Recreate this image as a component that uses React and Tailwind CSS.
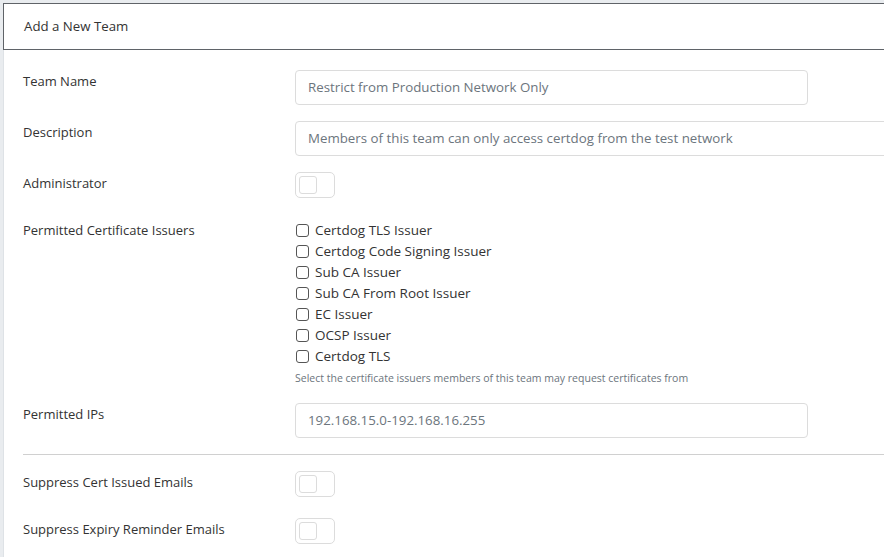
const issuers = [
  'Certdog TLS Issuer',
  'Certdog Code Signing Issuer',
  'Sub CA Issuer',
  'Sub CA From Root Issuer',
  'EC Issuer',
  'OCSP Issuer',
  'Certdog TLS',
];

function Toggle() {
  return (
    <div className="w-[40px] h-[26px] rounded-[5px] border border-[#dcdcdc] bg-white p-[3px]">
      <div className="w-[18px] h-[18px] rounded-[3px] border border-[#dcdcdc]" />
    </div>
  );
}

function Row({ label, children, className = '' }) {
  return (
    <div className={`flex ${className}`}>
      <div className="w-[291px] shrink-0 pl-[19px] text-[13px] text-[#333] leading-[20px]">{label}</div>
      <div className="flex-1 min-w-0">{children}</div>
    </div>
  );
}

export default function App() {
  return (
    <div className="w-[884px] h-[557px] overflow-hidden bg-[#e9ecef] pl-[3px] pt-[3px] font-['Open_Sans',sans-serif]">
      <div className="h-full bg-white border-l border-[#dee2e6]">
        <div className="h-[47px] border border-r-0 border-[#5f6368] bg-white flex items-center pl-[20px] pt-[1px] text-[13.25px] text-[#333] -ml-px">
          Add a New Team
        </div>

        <div className="pt-[20px]">
          <Row label={<div className="pt-[1px]">Team Name</div>}>
            <div className="w-[513px] h-[35px] border border-[#dcdcdc] rounded-[4px] flex items-center px-[12px] text-[13.3px] text-[#6c757d]">
              Restrict from Production Network Only
            </div>
          </Row>

          <Row label={<div className="pt-[1px]">Description</div>} className="mt-[16px]">
            <div className="w-[620px] h-[35px] border border-[#dcdcdc] rounded-[4px] flex items-center px-[12px] text-[13.3px] text-[#6c757d] whitespace-nowrap">
              Members of this team can only access certdog from the test network
            </div>
          </Row>

          <Row label={<div className="pt-[1px]">Administrator</div>} className="mt-[16px]">
            <Toggle />
          </Row>

          <Row label={<div>Permitted Certificate Issuers</div>} className="mt-[22px]">
            <div className="flex flex-col">
              {issuers.map((i) => (
                <label key={i} className="flex items-center h-[21px] text-[13.5px] text-[#333]">
                  <span className="w-[13px] h-[13px] ml-[1px] mr-[6px] border border-[#555] rounded-[3px] bg-white" />
                  {i}
                </label>
              ))}
              <div className="text-[10.5px] text-[#6c757d] mt-[4px] leading-[14px]">
                Select the certificate issuers members of this team may request certificates from
              </div>
            </div>
          </Row>

          <Row label={<div className="pt-[1px]">Permitted IPs</div>} className="mt-[18px]">
            <div className="w-[513px] h-[35px] border border-[#dcdcdc] rounded-[4px] flex items-center px-[12px] text-[13.3px] text-[#6c757d]">
              192.168.15.0-192.168.16.255
            </div>
          </Row>

          <div className="ml-[19px] mt-[16px] border-t border-[#d0d0d0]" />

          <Row label={<div className="pt-[1px]">Suppress Cert Issued Emails</div>} className="mt-[16px]">
            <Toggle />
          </Row>

          <Row label={<div className="pt-[1px]">Suppress Expiry Reminder Emails</div>} className="mt-[21px]">
            <Toggle />
          </Row>
        </div>
      </div>
    </div>
  );
}
